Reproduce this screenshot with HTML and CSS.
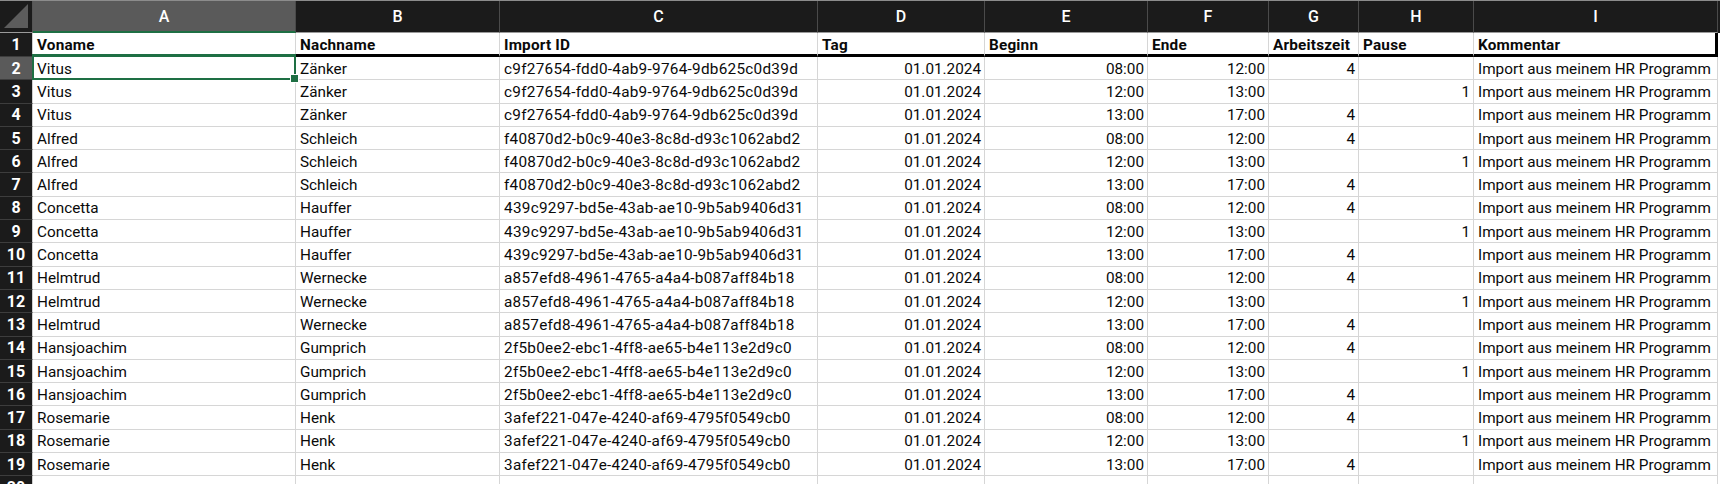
FILE: index.html
```html
<!DOCTYPE html>
<html lang="de">
<head>
<meta charset="utf-8">
<title>Tabelle</title>
<link rel="stylesheet" href="styles.css">
</head>
<body>
<div class="sheet">
  <div class="row colhead">
    <div class="corner"><span class="tri"></span></div>
    <div class="ch active">A</div><div class="ch">B</div><div class="ch">C</div><div class="ch">D</div><div class="ch">E</div><div class="ch">F</div><div class="ch">G</div><div class="ch">H</div><div class="ch">I</div>
  </div>
  <div class="row head">
    <div class="rh">1</div>
    <div class="c b">Voname</div><div class="c b">Nachname</div><div class="c b">Import ID</div><div class="c b">Tag</div><div class="c b">Beginn</div><div class="c b">Ende</div><div class="c b">Arbeitszeit</div><div class="c b">Pause</div><div class="c b last">Kommentar</div>
  </div>
  <div class="row">
    <div class="rh active">2</div>
    <div class="c sel">Vitus</div><div class="c">Zänker</div><div class="c g">c9f27654-fdd0-4ab9-9764-9db625c0d39d</div><div class="c r">01.01.2024</div><div class="c r">08:00</div><div class="c r">12:00</div><div class="c r">4</div><div class="c r"></div><div class="c">Import aus meinem HR Programm</div>
  </div>
  <div class="row">
    <div class="rh">3</div>
    <div class="c">Vitus</div><div class="c">Zänker</div><div class="c g">c9f27654-fdd0-4ab9-9764-9db625c0d39d</div><div class="c r">01.01.2024</div><div class="c r">12:00</div><div class="c r">13:00</div><div class="c r"></div><div class="c r">1</div><div class="c">Import aus meinem HR Programm</div>
  </div>
  <div class="row">
    <div class="rh">4</div>
    <div class="c">Vitus</div><div class="c">Zänker</div><div class="c g">c9f27654-fdd0-4ab9-9764-9db625c0d39d</div><div class="c r">01.01.2024</div><div class="c r">13:00</div><div class="c r">17:00</div><div class="c r">4</div><div class="c r"></div><div class="c">Import aus meinem HR Programm</div>
  </div>
  <div class="row">
    <div class="rh">5</div>
    <div class="c">Alfred</div><div class="c">Schleich</div><div class="c g">f40870d2-b0c9-40e3-8c8d-d93c1062abd2</div><div class="c r">01.01.2024</div><div class="c r">08:00</div><div class="c r">12:00</div><div class="c r">4</div><div class="c r"></div><div class="c">Import aus meinem HR Programm</div>
  </div>
  <div class="row">
    <div class="rh">6</div>
    <div class="c">Alfred</div><div class="c">Schleich</div><div class="c g">f40870d2-b0c9-40e3-8c8d-d93c1062abd2</div><div class="c r">01.01.2024</div><div class="c r">12:00</div><div class="c r">13:00</div><div class="c r"></div><div class="c r">1</div><div class="c">Import aus meinem HR Programm</div>
  </div>
  <div class="row">
    <div class="rh">7</div>
    <div class="c">Alfred</div><div class="c">Schleich</div><div class="c g">f40870d2-b0c9-40e3-8c8d-d93c1062abd2</div><div class="c r">01.01.2024</div><div class="c r">13:00</div><div class="c r">17:00</div><div class="c r">4</div><div class="c r"></div><div class="c">Import aus meinem HR Programm</div>
  </div>
  <div class="row">
    <div class="rh">8</div>
    <div class="c">Concetta</div><div class="c">Hauffer</div><div class="c g">439c9297-bd5e-43ab-ae10-9b5ab9406d31</div><div class="c r">01.01.2024</div><div class="c r">08:00</div><div class="c r">12:00</div><div class="c r">4</div><div class="c r"></div><div class="c">Import aus meinem HR Programm</div>
  </div>
  <div class="row">
    <div class="rh">9</div>
    <div class="c">Concetta</div><div class="c">Hauffer</div><div class="c g">439c9297-bd5e-43ab-ae10-9b5ab9406d31</div><div class="c r">01.01.2024</div><div class="c r">12:00</div><div class="c r">13:00</div><div class="c r"></div><div class="c r">1</div><div class="c">Import aus meinem HR Programm</div>
  </div>
  <div class="row">
    <div class="rh">10</div>
    <div class="c">Concetta</div><div class="c">Hauffer</div><div class="c g">439c9297-bd5e-43ab-ae10-9b5ab9406d31</div><div class="c r">01.01.2024</div><div class="c r">13:00</div><div class="c r">17:00</div><div class="c r">4</div><div class="c r"></div><div class="c">Import aus meinem HR Programm</div>
  </div>
  <div class="row">
    <div class="rh">11</div>
    <div class="c">Helmtrud</div><div class="c">Wernecke</div><div class="c g">a857efd8-4961-4765-a4a4-b087aff84b18</div><div class="c r">01.01.2024</div><div class="c r">08:00</div><div class="c r">12:00</div><div class="c r">4</div><div class="c r"></div><div class="c">Import aus meinem HR Programm</div>
  </div>
  <div class="row">
    <div class="rh">12</div>
    <div class="c">Helmtrud</div><div class="c">Wernecke</div><div class="c g">a857efd8-4961-4765-a4a4-b087aff84b18</div><div class="c r">01.01.2024</div><div class="c r">12:00</div><div class="c r">13:00</div><div class="c r"></div><div class="c r">1</div><div class="c">Import aus meinem HR Programm</div>
  </div>
  <div class="row">
    <div class="rh">13</div>
    <div class="c">Helmtrud</div><div class="c">Wernecke</div><div class="c g">a857efd8-4961-4765-a4a4-b087aff84b18</div><div class="c r">01.01.2024</div><div class="c r">13:00</div><div class="c r">17:00</div><div class="c r">4</div><div class="c r"></div><div class="c">Import aus meinem HR Programm</div>
  </div>
  <div class="row">
    <div class="rh">14</div>
    <div class="c">Hansjoachim</div><div class="c">Gumprich</div><div class="c g">2f5b0ee2-ebc1-4ff8-ae65-b4e113e2d9c0</div><div class="c r">01.01.2024</div><div class="c r">08:00</div><div class="c r">12:00</div><div class="c r">4</div><div class="c r"></div><div class="c">Import aus meinem HR Programm</div>
  </div>
  <div class="row">
    <div class="rh">15</div>
    <div class="c">Hansjoachim</div><div class="c">Gumprich</div><div class="c g">2f5b0ee2-ebc1-4ff8-ae65-b4e113e2d9c0</div><div class="c r">01.01.2024</div><div class="c r">12:00</div><div class="c r">13:00</div><div class="c r"></div><div class="c r">1</div><div class="c">Import aus meinem HR Programm</div>
  </div>
  <div class="row">
    <div class="rh">16</div>
    <div class="c">Hansjoachim</div><div class="c">Gumprich</div><div class="c g">2f5b0ee2-ebc1-4ff8-ae65-b4e113e2d9c0</div><div class="c r">01.01.2024</div><div class="c r">13:00</div><div class="c r">17:00</div><div class="c r">4</div><div class="c r"></div><div class="c">Import aus meinem HR Programm</div>
  </div>
  <div class="row">
    <div class="rh">17</div>
    <div class="c">Rosemarie</div><div class="c">Henk</div><div class="c g">3afef221-047e-4240-af69-4795f0549cb0</div><div class="c r">01.01.2024</div><div class="c r">08:00</div><div class="c r">12:00</div><div class="c r">4</div><div class="c r"></div><div class="c">Import aus meinem HR Programm</div>
  </div>
  <div class="row">
    <div class="rh">18</div>
    <div class="c">Rosemarie</div><div class="c">Henk</div><div class="c g">3afef221-047e-4240-af69-4795f0549cb0</div><div class="c r">01.01.2024</div><div class="c r">12:00</div><div class="c r">13:00</div><div class="c r"></div><div class="c r">1</div><div class="c">Import aus meinem HR Programm</div>
  </div>
  <div class="row">
    <div class="rh">19</div>
    <div class="c">Rosemarie</div><div class="c">Henk</div><div class="c g">3afef221-047e-4240-af69-4795f0549cb0</div><div class="c r">01.01.2024</div><div class="c r">13:00</div><div class="c r">17:00</div><div class="c r">4</div><div class="c r"></div><div class="c">Import aus meinem HR Programm</div>
  </div>
  <div class="row">
    <div class="rh">20</div>
    <div class="c"></div><div class="c"></div><div class="c"></div><div class="c"></div><div class="c"></div><div class="c"></div><div class="c"></div><div class="c"></div><div class="c"></div>
  </div>
</div>
</body>
</html>
```

FILE: styles.css
```css
* { box-sizing: border-box; }
html, body {
  margin: 0;
  padding: 0;
  background: #ffffff;
  overflow: hidden;
}
body {
  width: 1720px;
  height: 484px;
  font-family: Roboto, "Liberation Sans", Arial, sans-serif;
  font-size: 15.3px;
  color: #0a0a0a;
}
.sheet {
  display: flex;
  flex-direction: column;
  width: 1720px;
}
.row {
  display: grid;
  grid-template-columns: 33px 263px 204px 318px 167px 163px 121px 90px 115px 244px 2px;
  height: 23.3px;
  flex: none;
}
.colhead {
  height: 33px;
  background: #1b1b1b;
  border-top: 1px solid #8c8c8c;
}
.head { height: 24px; }

.corner {
  position: relative;
  background: #1b1b1b;
  border-right: 1px solid #555;
  border-bottom: 1px solid #9a9a9a;
}
.tri {
  position: absolute;
  right: 4px;
  bottom: 4px;
  width: 0;
  height: 0;
  border-left: 24px solid transparent;
  border-bottom: 24px solid #5c5c5c;
}
.ch {
  display: flex;
  align-items: center;
  justify-content: center;
  color: #ffffff;
  font-size: 16px;
  font-weight: 500;
  background: #1b1b1b;
  border-right: 1px solid #4a4a4a;
  border-bottom: 1px solid #9a9a9a;
}
.ch.active {
  background: #5a5a5a;
  border-bottom: 2px solid #1e6f44;
}

.rh {
  display: flex;
  align-items: center;
  justify-content: center;
  background: #1b1b1b;
  color: #ffffff;
  font-weight: 700;
  font-size: 16px;
  border-bottom: 1px solid #3d3d3d;
  border-right: 1px solid #d0d0d0;
}
.rh.active { background: #5a5a5a; }

.c {
  position: relative;
  display: flex;
  align-items: center;
  padding: 1px 3px 0 4px;
  white-space: nowrap;
  overflow: visible;
  border-right: 1px solid #d6d6d6;
  border-bottom: 1px solid #d6d6d6;
}
.c.g { letter-spacing: 0.28px; }
.c.r { justify-content: flex-end; padding-right: 3px; }
.c.b {
  font-weight: 700;
  border-bottom: 3px solid #000000;
  padding-top: 2px;
  letter-spacing: 0.2px;
}
.c.last { border-right: 3px solid #000000; }

.c.sel::after {
  content: "";
  position: absolute;
  left: -1px;
  top: -3px;
  right: -1px;
  bottom: -1px;
  border: 2px solid #1e6f44;
  border-top-width: 3px;
  pointer-events: none;
}
.c.sel::before {
  content: "";
  position: absolute;
  right: -4px;
  bottom: -4px;
  width: 7px;
  height: 7px;
  background: #1e6f44;
  border: 1px solid #ffffff;
  z-index: 2;
}
```
